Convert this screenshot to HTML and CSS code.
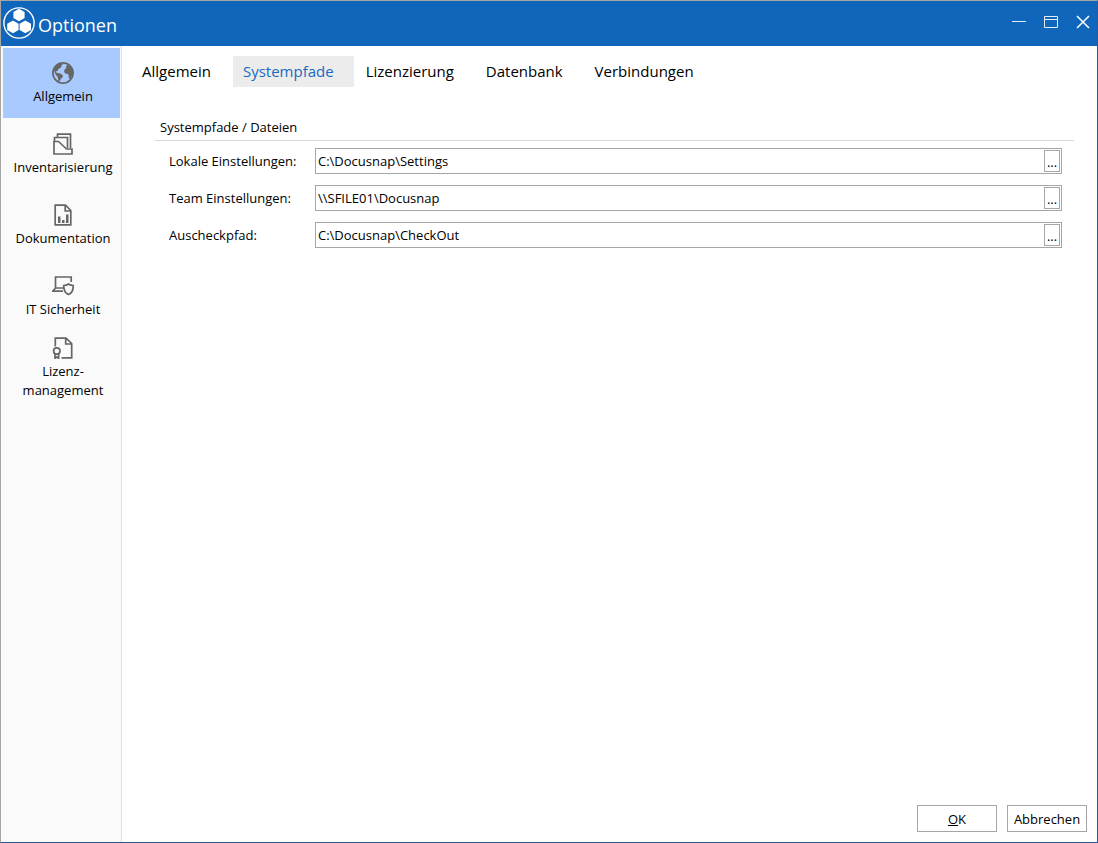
FILE: index.html
```html
<!DOCTYPE html>
<html lang="de">
<head>
<meta charset="utf-8">
<title>Optionen</title>
<link rel="stylesheet" href="styles.css">
</head>
<body>
<div class="window">
  <header class="titlebar">
    <svg class="logo" width="34" height="34" viewBox="0 0 34 34" aria-hidden="true">
      <circle cx="17" cy="17" r="15.1" fill="none" stroke="#fff" stroke-width="1.4"/>
      <g fill="#fff">
        <path d="M17 2.8l5.6 3.1v6.2L17 15.3l-5.6-3.2V5.9z"/>
        <path d="M11 14.6l5.6 3.2V24L11 27.300l-5.800-3.300v-6.200z"/>
        <path d="M23.300 14.6l5.700 3.200V24l-5.700 3.300-5.700-3.300v-6.200z"/>
      </g>
    </svg>
    <h1 class="title">Optionen</h1>
    <div class="controls">
      <button class="control" aria-label="Minimieren"><svg width="16" height="16" viewBox="0 0 16 16"><path d="M1 7.500h14"/></svg></button>
      <button class="control" aria-label="Maximieren"><svg width="16" height="16" viewBox="0 0 16 16"><path d="M1.500 2.500h13v11h-13zM1.500 5.500h13"/></svg></button>
      <button class="control" aria-label="Schließen"><svg width="16" height="16" viewBox="0 0 16 16"><path class="cross" d="M2 2l12 12M14 2L2 14"/></svg></button>
    </div>
  </header>
  <div class="body">
    <nav class="sidebar">
      <button class="side-item active">
        <svg width="22" height="22" viewBox="0 0 22 22"><circle cx="11" cy="11" r="10.100"/><path class="solid" d="M2 7l3-4 3-1.500 3 .3-.7 1.400-1.600.3 1 1.200-1.800 1.500-1.600.8-.4 1.700-1.800.5.3 1.500 1.600.4 2.200.3 2.800 2-.6 2-1.800 1.500-.8 2.600-1.300-.5-.8-4-1.700-2L2.500 10zM14 4.500l1.500-2 3 1.800 2 3.700.5 4-1.500 3-1.500 2-1.200-.7-.2-3.300-1.300-1.200-2.200-.2-1-2 .5-2.300 2-1.300-.6-.8z"/></svg>
        <span>Allgemein</span>
      </button>
      <button class="side-item">
        <svg width="22" height="22" viewBox="0 0 22 22"><path d="M2 21V8.500h4.500l8 7.500h5.500v5zM2.500 8V4.500h13V15M5.500 4V1.200h13V15"/></svg>
        <span>Inventarisierung</span>
      </button>
      <button class="side-item">
        <svg width="22" height="22" viewBox="0 0 22 22"><path d="M3.200 1.200h10.300l5.300 5.300v14.300H3.200zM13.200 1.500v5.500h5.500"/><path class="solid" d="M6 12.500h2.500V19H6zM10 16h2.500v3H10zM14 10.500h2.500V19H14z"/></svg>
        <span>Dokumentation</span>
      </button>
      <button class="side-item">
        <svg width="22" height="22" viewBox="0 0 22 22"><path d="M3.500 13V2h15.700v5M12 13H3.500L.8 16.200H11"/><path d="M16.500 9c1.500 1 3 1.400 4.800 1.500 0 5-1 7.500-4.800 9-3.800-1.500-4.800-4-4.800-9 1.800-.1 3.300-.5 4.800-1.500z"/></svg>
        <span>IT Sicherheit</span>
      </button>
      <button class="side-item">
        <svg width="22" height="22" viewBox="0 0 22 22"><path d="M3.300 9.500V1.200h10.700l5.700 5.300v14.300H9.500M13.700 1.500v5.500h5.500"/><circle cx="4.800" cy="14" r="3.200"/><path d="M3 16.700v4.500L4.800 20l1.800 1.200v-4.500"/></svg>
        <span>Lizenz-<br>management</span>
      </button>
    </nav>
    <main class="content">
      <nav class="tabs">
        <button class="tab">Allgemein</button>
        <button class="tab selected">Systempfade</button>
        <button class="tab">Lizenzierung</button>
        <button class="tab">Datenbank</button>
        <button class="tab">Verbindungen</button>
      </nav>
      <section class="group">
        <h2 class="group-title">Systempfade / Dateien</h2>
        <div class="row">
          <label for="local">Lokale Einstellungen:</label>
          <div class="path"><input id="local" type="text" value="C:\Docusnap\Settings"><button class="browse" aria-label="Lokale Einstellungen wählen">...</button></div>
        </div>
        <div class="row">
          <label for="team">Team Einstellungen:</label>
          <div class="path"><input id="team" type="text" value="\\SFILE01\Docusnap"><button class="browse" aria-label="Team Einstellungen wählen">...</button></div>
        </div>
        <div class="row">
          <label for="checkout">Auscheckpfad:</label>
          <div class="path"><input id="checkout" type="text" value="C:\Docusnap\CheckOut"><button class="browse" aria-label="Auscheckpfad wählen">...</button></div>
        </div>
      </section>
      <footer class="actions">
        <button class="action"><u>O</u>K</button>
        <button class="action">Abbrechen</button>
      </footer>
    </main>
  </div>
</div>
</body>
</html>
```
FILE: styles.css
```css
* { box-sizing: border-box; }
body { margin: 0; font: 13px/19px "Open Sans", "Noto Sans", sans-serif; color: #000; }
button, input { font: inherit; color: inherit; margin: 0; padding: 0; border: 0; border-radius: 0; background: none; }
h1, h2 { margin: 0; font-weight: 400; }
.window { min-height: 100vh; display: flex; flex-direction: column; background: #fff; border: 1px solid #2b579a; border-top-color: #a6a6a6; border-left-color: #a6a6a6; }
.titlebar { height: 45px; display: flex; align-items: center; background: #0f66ba; color: #fff; padding: 0 6px 2px 1px; }
.logo { flex: none; }
.title { flex: 1; font-size: 18px; line-height: 24px; padding: 4px 0 0 2px; }
.controls { display: flex; gap: 16px; padding-bottom: 2px; }
.control { display: flex; }
.control svg { fill: none; stroke: #e4eef8; stroke-width: 1; }
.control .cross { stroke: #fff; stroke-width: 1.5; }
.body { flex: 1; display: flex; }
.sidebar { flex: none; width: 121px; padding: 2px 1px 0 2px; display: flex; flex-direction: column; gap: 1px; background: #fafafa; border-right: 1px solid #e1e1e1; }
.side-item { height: 70px; padding: 2px 0 0 3px; display: flex; flex-direction: column; align-items: center; justify-content: center; gap: 3px; text-align: center; }
.side-item.active { background: #a8caff; }
.side-item svg { fill: none; stroke: #666; stroke-width: 1.7; flex: none; }
.side-item .solid { fill: #666; stroke: none; }
.content { flex: 1; min-width: 0; display: flex; flex-direction: column; padding: 10px 10px; }
.tabs { display: flex; gap: 2px; }
.tab { height: 31px; padding: 0 20px 2px 10px; font-size: 15px; line-height: 20px; white-space: nowrap; }
.tab.selected { background: #ececec; color: #1a69c0; }
.group { flex: 1; margin: 31px 13px 0 23px; }
.group-title { font-size: 13px; line-height: 19px; padding: 0 5px 3px; border-bottom: 1px solid #d6d6d6; }
.row { display: flex; align-items: center; margin: 7px 12px 11px 14px; }
.row + .row { margin-top: 0; }
.row label { flex: none; width: 146px; }
.path { flex: 1; min-width: 0; height: 26px; display: flex; padding: 1px; border: 1px solid #a6a6a6; }
.path input { flex: 1; min-width: 0; padding-left: 1px; outline: 0; }
.browse { flex: none; width: 16px; padding-top: 2px; border: 1px solid #a6a6a6; line-height: 18px; }
.actions { display: flex; justify-content: flex-end; gap: 10px; }
.action { width: 80px; height: 27px; padding-top: 2px; border: 1px solid #a6a6a6; }
```
